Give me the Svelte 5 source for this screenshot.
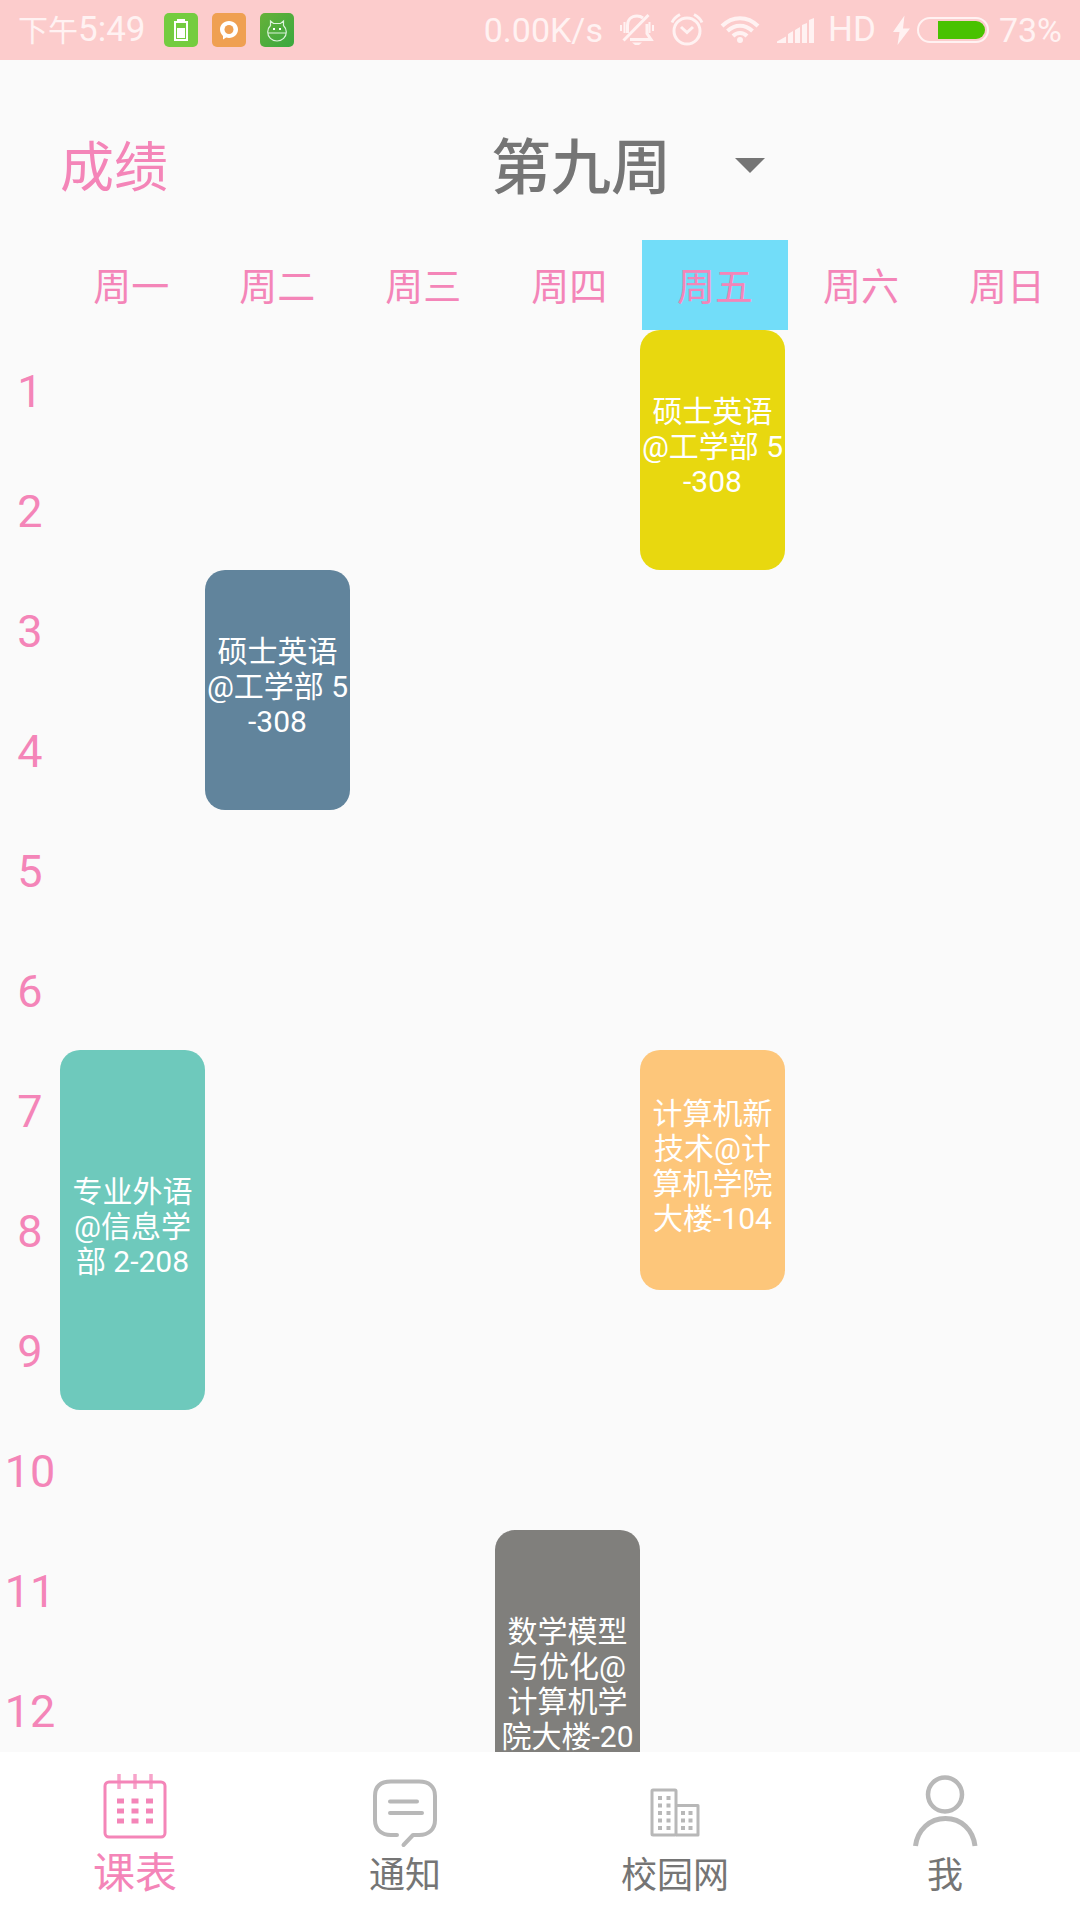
<script>
  const weeks = ['第九周', '第十周'];
  let week = $state('第九周');
  let active = $state('schedule');

  const days = ['周一', '周二', '周三', '周四', '周五', '周六', '周日'];
  const today = '周五';
  const periods = Array.from({ length: 12 }, (_, i) => i + 1);

  const courses = [
    { day: 5, start: 1, end: 3, tone: 'yellow', lines: ['硕士英语', '@工学部 5', '-308'] },
    { day: 2, start: 3, end: 5, tone: 'slate', lines: ['硕士英语', '@工学部 5', '-308'] },
    { day: 1, start: 7, end: 10, tone: 'teal', lines: ['专业外语', '@信息学', '部 2-208'] },
    { day: 5, start: 7, end: 9, tone: 'orange', lines: ['计算机新', '技术@计', '算机学院', '大楼-104'] },
    { day: 4, start: 11, end: 14, tone: 'gray', lines: ['数学模型', '与优化@', '计算机学', '院大楼-20'] }
  ];

  const tabs = [
    { id: 'schedule', label: '课表' },
    { id: 'notice', label: '通知' },
    { id: 'campus', label: '校园网' },
    { id: 'me', label: '我' }
  ];
</script>

<div class="app">
  <div class="status">
    <div class="status-left">
      <span class="time"><span class="ampm">下午</span>5:49</span>
      <svg width="34" height="34" viewBox="0 0 34 34" aria-hidden="true">
        <rect width="34" height="34" rx="5" fill="#74cc3f" />
        <rect x="13" y="6" width="8" height="2" fill="#fff" />
        <rect x="11" y="9" width="12" height="18" fill="none" stroke="#fff" stroke-width="2" />
        <rect x="13" y="15" width="8" height="10" fill="#fff" />
      </svg>
      <svg width="34" height="34" viewBox="0 0 34 34" aria-hidden="true">
        <rect width="34" height="34" rx="5" fill="#efa052" />
        <path d="M17 8c5.200 0 9 3.700 9 8.500S22.200 25 17 25c-1 0-2-.1-2.800-.4L11 26.500v-3.600C9.200 21.400 8 19 8 16.500 8 11.700 11.800 8 17 8z" fill="#fff" />
        <circle cx="17" cy="16.500" r="4.500" fill="#efa052" />
      </svg>
      <svg width="34" height="34" viewBox="0 0 34 34" aria-hidden="true">
        <defs>
          <linearGradient id="leaf" x1="0" y1="0" x2="1" y2="1">
            <stop offset="0" stop-color="#66b139" />
            <stop offset="1" stop-color="#39a83f" />
          </linearGradient>
        </defs>
        <rect width="34" height="34" rx="5" fill="url(#leaf)" />
        <path d="M10.500 12.500L10.500 8l3 2.500h7l3-2.500v4.500c2 2 2.800 4 2.800 6.500 0 5-4 9-9.300 9s-9.300-4-9.300-9c0-2.500.8-4.500 2.800-6.500zM8 20h18" fill="none" stroke="#dcf3dc" stroke-width="1.200" />
        <path d="M13 15h2v2h-2zM19 15h2v2h-2z" fill="#fff" />
      </svg>
    </div>
    <div class="status-right">
      <span>0.00K/s</span>
      <svg width="47" height="34" viewBox="613 13 47 34" aria-hidden="true" fill="none" stroke="currentColor" stroke-width="3">
        <path d="M627.500 33V25.500c0-6 4-9.500 9.500-9.500 2.500 0 4.500.8 6 2" />
        <path d="M647 24v9.500l4 6h-21" />
        <path d="M623.500 40.500L648.500 15" />
        <path d="M632 42.500h10l-3 2.500h-4z" fill="currentColor" stroke="none" />
        <path d="M621 25v6M624.500 22v11M649.500 22v11M653 25v6" stroke-width="2" />
      </svg>
      <svg width="40" height="34" viewBox="670 13 40 34" aria-hidden="true" fill="none" stroke="currentColor" stroke-width="3">
        <circle cx="687" cy="31" r="13" />
        <path d="M681 27l6 5.500 6-5.500" />
        <path d="M672 22.500c1.500-3.500 4-6 8-8M702 22.500c-1.500-3.500-4-6-8-8" />
      </svg>
      <svg width="47" height="34" viewBox="720 13 47 34" aria-hidden="true" fill="none" stroke="currentColor" stroke-width="4">
        <path d="M722 26c10.500-10.500 25.500-10.500 36 0" />
        <path d="M727.500 31c7.500-7 17.500-7 25 0" />
        <path d="M733 36c4-4 10-4 14 0" />
        <circle cx="740" cy="40" r="3" fill="currentColor" stroke="none" />
      </svg>
      <svg width="41" height="34" viewBox="777 13 41 34" aria-hidden="true" fill="currentColor">
        <path d="M777 43v-1.500l9-5V43zM788 43v-9l5-3v12zM795 43V30l5-3v16zM802 43V25l5-2v20zM809 43V20l5-2v25z" />
      </svg>
      <span class="carrier">HD</span>
      <svg width="103" height="34" viewBox="886 13 103 34" aria-hidden="true">
        <path d="M904.500 15.500L893 32h6.500L897.500 45l12.500-16.500h-7z" fill="currentColor" />
        <rect x="918" y="18" width="70" height="24" rx="12" fill="none" stroke="currentColor" stroke-width="2" />
        <path d="M938 21h38a9 9 0 0 1 0 18h-38z" fill="#48c200" />
      </svg>
      <span>73%</span>
    </div>
  </div>

  <header class="header">
    <button class="grades" type="button">成绩</button>
    <div class="week">
      <select bind:value={week} aria-label="周次">
        {#each weeks as w}
          <option value={w}>{w}</option>
        {/each}
      </select>
      <svg width="30" height="15" viewBox="0 0 30 15" aria-hidden="true"><path d="M0 0h30L15 15z" fill="#757575" /></svg>
    </div>
  </header>

  <div class="days">
    {#each days as day, i}
      <div class="day" class:first={i === 0} class:today={day === today}>{day}</div>
    {/each}
  </div>

  <main class="schedule">
    <div class="grid">
      {#each periods as n}
        <div class="period" style:grid-row={n}>{n}</div>
      {/each}
      {#each courses as c}
        <div class="course {c.tone}" style:grid-column={c.day + 1} style:grid-row="{c.start} / {c.end}">
          {#each c.lines as line}
            <span>{line}</span>
          {/each}
        </div>
      {/each}
    </div>
  </main>

  <nav class="tabs">
    {#each tabs as tab}
      <button type="button" class="tab" class:active={active === tab.id} onclick={() => (active = tab.id)}>
        <svg width="72" height="76" viewBox="0 0 72 76" aria-hidden="true" fill="none" stroke="currentColor">
          {#if tab.id === 'schedule'}
            <rect x="6" y="10" width="60" height="55" rx="4" stroke-width="3" />
            <path d="M20 2v15M36 2v15M52 2v15" stroke-width="3.500" opacity=".75" />
            <path d="M18 29h7M32.500 29h7M47 29h7M18 39h7M32.500 39h7M47 39h7M18 49h7M32.500 49h7M47 49h7" stroke-width="5" />
          {:else if tab.id === 'notice'}
            <path d="M28 63h-6C12 63 6 57 6 48V24C6 14 12 9.500 22 9.500h28c10 0 16 5 16 14.500v24c0 9-6 15-16 15h-6L34.500 73" stroke-width="4" stroke-linecap="round" stroke-linejoin="round" />
            <path d="M21 29.500h27M21 41h32" stroke-width="4" stroke-linecap="round" />
          {:else if tab.id === 'campus'}
            <rect x="13" y="18" width="24" height="45" rx="1" stroke-width="3" />
            <path d="M37 33.500h22V63H37" stroke-width="3" stroke-linejoin="round" />
            <path d="M21 24v35M29.500 24v35" stroke-width="4" stroke-dasharray="4 3.500" />
            <path d="M44 39v20M51.500 39v20" stroke-width="4" stroke-dasharray="4 3.500" />
          {:else}
            <circle cx="36" cy="22.500" r="17" stroke-width="4.500" />
            <path d="M6.500 74C8.500 58 20.500 46.500 36.500 46.500S64 58 66 74" stroke-width="5" />
          {/if}
        </svg>
        <span class="line"><span class="label">{tab.label}</span></span>
      </button>
    {/each}
  </nav>
</div>

<style>
  :global(body) {
    margin: 0;
    background: #fafafa;
  }

  .app {
    display: flex;
    flex-direction: column;
    height: 100vh;
    overflow: hidden;
    background: #fafafa;
    color: #757575;
    font-family: Roboto, 'Noto Sans CJK SC', sans-serif;
  }

  button,
  select {
    margin: 0;
    padding: 0;
    border: 0;
    background: none;
    color: inherit;
    font: inherit;
    appearance: none;
    cursor: pointer;
  }

  svg {
    display: block;
    flex: none;
  }

  .status {
    display: flex;
    align-items: center;
    justify-content: space-between;
    height: 60px;
    padding: 0 18px;
    background: #fccccc;
    color: #fff2f2;
    font-size: 34px;
    line-height: 60px;
    white-space: nowrap;
  }

  .status-left {
    display: flex;
    align-items: center;
    gap: 14px;
  }

  .status-right {
    display: flex;
    align-items: center;
    gap: 10px;
  }

  .time {
    margin-right: 4px;
  }

  .time,
  .carrier {
    font-size: 35px;
  }

  .ampm {
    font-size: 30px;
  }

  .header {
    display: grid;
    grid-template-columns: 5fr 6fr;
    align-items: center;
    height: 150px;
    padding-top: 30px;
  }

  .grades {
    justify-self: start;
    margin-left: 60px;
    padding-top: 8px;
    color: #f485b8;
    font-size: 54px;
    line-height: 72px;
  }

  .week {
    display: grid;
    align-items: center;
    justify-self: start;
  }

  .week select {
    grid-area: 1 / 1;
    box-sizing: border-box;
    height: 98px;
    padding: 8px 118px 0 0;
    font-size: 60px;
    font-weight: 500;
    line-height: 90px;
  }

  .week svg {
    grid-area: 1 / 1;
    justify-self: end;
    margin-right: 24px;
    pointer-events: none;
  }

  .days {
    display: grid;
    grid-template-columns: 2fr repeat(7, 5fr);
    flex: none;
    color: #f485b8;
    font-size: 38px;
    line-height: 86px;
    text-align: center;
  }

  .day {
    padding-top: 4px;
  }

  .day.first {
    grid-column: 2;
  }

  .today {
    background: #72ddf9;
  }

  .schedule {
    flex: 1 1 0;
    min-height: 0;
    overflow-y: auto;
    scrollbar-width: none;
  }

  .grid {
    display: grid;
    grid-template-columns: 12fr repeat(7, 29fr) 1fr;
    grid-template-rows: repeat(12, 120px) 76px;
  }

  .period {
    grid-column: 1;
    padding-top: 4px;
    color: #f485b8;
    font-size: 45px;
    line-height: 116px;
    text-align: center;
  }

  .course {
    display: flex;
    flex-direction: column;
    align-items: center;
    justify-content: center;
    min-width: 0;
    padding-bottom: 8px;
    border-radius: 20px;
    color: #fff;
    font-size: 30px;
    line-height: 35px;
    white-space: nowrap;
  }

  .yellow {
    background: #e8d80f;
  }

  .slate {
    background: #61849c;
  }

  .teal {
    background: #6ec9bc;
  }

  .orange {
    background: #fdc67a;
  }

  .gray {
    background: #807f7c;
  }

  .tabs {
    display: grid;
    grid-template-columns: repeat(4, 1fr);
    flex: none;
    height: 168px;
    background: #fff;
  }

  .tab {
    display: flex;
    flex-direction: column;
    align-items: center;
    gap: 2px;
    padding-top: 20px;
  }

  .tab svg {
    color: #b8b8b8;
  }

  .line {
    font-size: 42px;
    line-height: 48px;
  }

  .label {
    font-size: 36px;
    color: #757575;
  }

  .active svg,
  .active .label {
    color: #f485b8;
  }

  .active .label {
    font-size: 42px;
  }
</style>
